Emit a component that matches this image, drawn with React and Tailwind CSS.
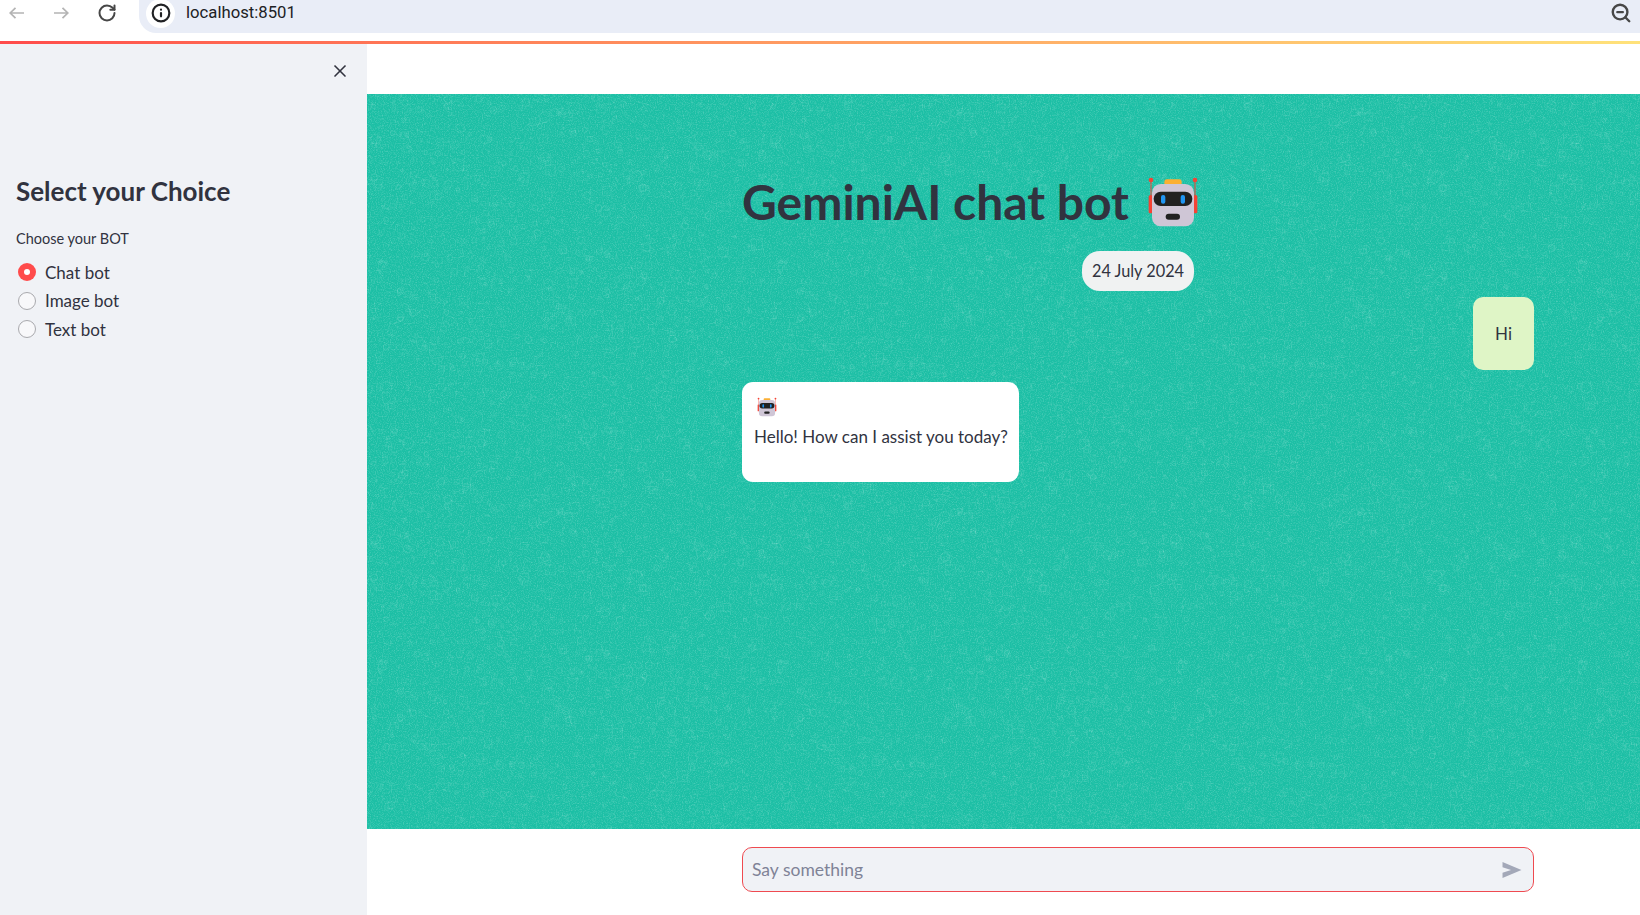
import { Info, RotateCw, X, ZoomOut } from 'lucide-react';

const bots = ['Chat bot', 'Image bot', 'Text bot'];

// small seeded generator so the wallpaper doodles stay the same on every render
const makeDoodles = () => {
  let seed = 7;
  const next = () => {
    seed = (seed * 16807) % 2147483647;
    return seed / 2147483647;
  };
  const doodles = [];
  for (let i = 0; i < 1500; i += 1) {
    doodles.push({ x: next() * 400, y: next() * 400, r: 0.8 + next() * next() * 5, kind: Math.floor(next() * 3), angle: next() * 6.28 });
  }
  return doodles;
};

const doodles = makeDoodles();

function Wallpaper() {
  return (
    <svg className="absolute inset-0 h-full w-full" aria-hidden="true">
      <defs>
        <pattern id="doodles" width="400" height="400" patternUnits="userSpaceOnUse">
          {doodles.map((d, index) => {
            if (d.kind === 0) return <circle key={index} cx={d.x} cy={d.y} r={d.r} fill="none" stroke="#fff" strokeOpacity="0.1" strokeWidth="0.8" />;
            if (d.kind === 1) return <rect key={index} x={d.x} y={d.y} width={d.r * 2} height={d.r * 2} fill="none" stroke="#fff" strokeOpacity="0.08" strokeWidth="0.8" />;
            return (
              <line
                key={index}
                x1={d.x}
                y1={d.y}
                x2={d.x + Math.cos(d.angle) * d.r * 2}
                y2={d.y + Math.sin(d.angle) * d.r * 2}
                stroke="#fff"
                strokeOpacity="0.13"
                strokeWidth="0.8"
              />
            );
          })}
        </pattern>
        <filter id="grain" x="0" y="0" width="100%" height="100%">
          <feTurbulence type="fractalNoise" baseFrequency="0.85" numOctaves="2" seed="4" />
          <feColorMatrix values="0 0 0 0 1  0 0 0 0 1  0 0 0 0 1  0 0 0 0.5 -0.22" />
        </filter>
      </defs>
      <rect width="100%" height="100%" fill="url(#doodles)" />
      <rect width="100%" height="100%" filter="url(#grain)" />
    </svg>
  );
}

function RobotIcon({ className }) {
  return (
    <svg className={className} viewBox="52 50 156 156" aria-hidden="true">
      <path d="M64 62V110M196 62V110" stroke="#f44336" strokeWidth="3" />
      <circle cx="64" cy="62" r="7" fill="#f44336" />
      <circle cx="196" cy="62" r="7" fill="#f44336" />
      <rect x="57" y="108" width="12" height="54" rx="4" fill="#f44336" />
      <rect x="191" y="108" width="12" height="54" rx="4" fill="#f44336" />
      <rect x="104" y="60" width="52" height="20" rx="7" fill="#fbb034" />
      <rect x="67" y="74" width="126" height="127" rx="26" fill="#cfc6d6" />
      <rect x="72" y="97" width="116" height="43" rx="21" fill="#212121" />
      <rect x="94" y="107" width="13" height="26" rx="6" fill="#2196f3" />
      <rect x="153" y="107" width="13" height="26" rx="6" fill="#2196f3" />
      <rect x="108" y="163" width="43" height="18" rx="9" fill="#212121" />
    </svg>
  );
}

function NavArrow({ className, d }) {
  return (
    <svg className={className} viewBox="0 0 15 12" fill="none" stroke="#b4b4b4" strokeWidth="1.7" aria-hidden="true">
      <path d={d} />
    </svg>
  );
}

export default function App() {
  return (
    <div className="flex h-[915px] w-[1640px] flex-col overflow-hidden bg-white font-['Lato',sans-serif] text-[#31333f]">
      <header className="flex h-[41px] items-start bg-white">
        <div className="flex h-[26px] items-center">
          <NavArrow className="ml-[9px] h-[12px] w-[15px]" d="M15 6H1.5M6.5 0.8L1.2 6L6.5 11.2" />
          <NavArrow className="ml-[30px] h-[12px] w-[15px]" d="M0 6H13.5M8.5 0.8L13.8 6L8.5 11.2" />
          <RotateCw className="ml-[27.5px] h-[20px] w-[20px] text-[#474747]" strokeWidth={2.4} />
        </div>
        <div className="ml-[22.5px] flex h-[33px] flex-1 items-center rounded-bl-[17px] bg-[#e9edf7] pb-[7px] pl-[7px] pr-[8px]">
          <span className="flex h-[29px] w-[29px] items-center justify-center rounded-full bg-white">
            <Info className="h-[20px] w-[20px] text-[#202124]" strokeWidth={2.6} />
          </span>
          <span className="ml-[11px] flex-1 font-['Roboto',sans-serif] text-[16.7px] text-[#202124]">localhost:8501</span>
          <ZoomOut className="h-[22px] w-[22px] text-[#474747]" strokeWidth={2.6} />
        </div>
      </header>
      <div className="h-[3px] bg-gradient-to-r from-[#ff4b4b] to-[#ffe27a]" />

      <div className="flex flex-1">
        <aside className="flex w-[367px] flex-col bg-[#f0f2f6] px-[16px]">
          <div className="flex justify-end pr-[1px] pt-[17px]">
            <X className="h-[20px] w-[20px] text-[#31333f]" />
          </div>
          <h2 className="mt-[92px] text-[26px] font-bold leading-[36px]">Select your Choice</h2>
          <p className="mt-[20px] text-[14.5px] leading-[20px]">Choose your BOT</p>
          <div className="mt-[9px] flex flex-col">
            {bots.map((bot, index) => (
              <div key={bot} className="flex h-[28.5px] items-center text-[17px]">
                {index === 0 ? (
                  <span className="ml-[2px] flex h-[18px] w-[18px] items-center justify-center rounded-full bg-[#ff4b4b]">
                    <span className="h-[6px] w-[6px] rounded-full bg-white" />
                  </span>
                ) : (
                  <span className="ml-[2px] h-[18px] w-[18px] rounded-full border border-[#a9a9ad] bg-[#f8f8fa]" />
                )}
                <span className="ml-[9px]">{bot}</span>
              </div>
            ))}
          </div>
        </aside>

        <main className="flex flex-1 flex-col">
          <div className="h-[50px] bg-white" />
          <section className="relative flex-1 bg-[#1cbfa5]">
            <Wallpaper />
            <div className="relative ml-[375px] flex w-[792px] flex-col pt-[77px]">
              <div className="flex h-[62px] items-center">
                <h1 className="text-[48px] font-bold leading-[62px]">GeminiAI chat bot</h1>
                <RobotIcon className="ml-[18px] h-[52px] w-[52px]" />
              </div>
              <div className="mt-[18px] flex w-[452px] justify-end">
                <span className="flex h-[40px] w-[112px] items-center justify-center rounded-[18px] bg-[#f0f2f2] text-[16.3px]">24 July 2024</span>
              </div>
              <div className="mt-[6px] flex justify-end">
                <div className="flex h-[73px] w-[61px] items-center justify-center rounded-[10px] bg-[#dff5c6] text-[17px]">Hi</div>
              </div>
              <div className="mt-[12px] h-[100px] w-[277px] rounded-[11px] bg-white pl-[12px] pt-[15px]">
                <RobotIcon className="ml-[3px] h-[20px] w-[20px]" />
                <p className="mt-[8px] text-[17px] leading-[24px]">Hello! How can I assist you today?</p>
              </div>
            </div>
          </section>
          <footer className="flex h-[86px] bg-white pl-[375px] pt-[18px]">
            <div className="flex h-[45px] w-[792px] items-center justify-between rounded-[10px] border border-[#ef4a50] bg-[#f0f2f6] pl-[9px] pr-[10px]">
              <span className="pt-[2px] text-[17.5px] text-[#7f8397]">Say something</span>
              <svg className="h-[18px] w-[22px]" viewBox="0 0 22 19" aria-hidden="true">
                <path d="M1 1L21 9.5L1 18V12.5L10 9.5L1 6.5Z" fill="#a3a8b8" />
              </svg>
            </div>
          </footer>
        </main>
      </div>
    </div>
  );
}
